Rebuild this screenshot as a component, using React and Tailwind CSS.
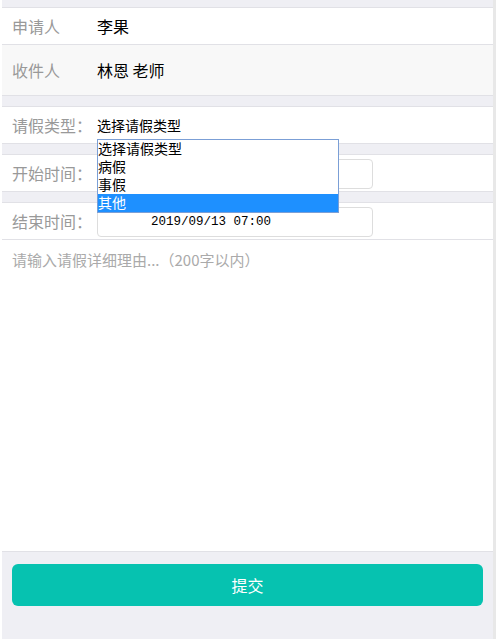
import React from "react";

const cjk = { fontFamily: '"Noto Sans CJK SC", "Noto Sans", sans-serif' };

function Row({ label, children, tall, shaded }) {
  return (
    <div
      className={`flex items-center border-b border-[#e1e1e6] ${tall ? "h-[51px]" : "h-[37px]"} ${shaded ? "bg-[#f8f8f8]" : "bg-white"}`}
    >
      <div className="w-[95px] shrink-0 whitespace-nowrap pl-[10px] text-[16px] text-[#999999] leading-none">{label}</div>
      <div className="flex-1 flex items-center">{children}</div>
    </div>
  );
}

const Band = ({ h }) => <div className={`${h} bg-[#efeff4] border-b border-[#e1e1e6]`} />;

const DateBox = ({ value }) => (
  <div className="w-[276px] h-[30px] mt-[2px] pr-[48px] border border-[#dddddd] rounded-[4px] flex items-center justify-center text-[12.5px] text-black font-['Liberation_Mono',monospace]">
    {value}
  </div>
);

export default function App() {
  const options = ["选择请假类型", "病假", "事假", "其他"];
  return (
    <div className="flex h-[639px] w-[496px] bg-white overflow-hidden" style={cjk}>
      <div className="w-[2px]" />
      <div className="relative flex flex-col w-[491px]">
        <Band h="h-[8px]" />
        <Row label="申请人">
          <span className="text-[16px] text-black leading-none">李果</span>
        </Row>
        <Row label="收件人" tall shaded>
          <span className="text-[16px] text-black leading-none">林恩 老师</span>
        </Row>
        <Band h="h-[11px]" />
        <Row label="请假类型：">
          <span className="text-[14px] text-black leading-none">选择请假类型</span>
        </Row>
        <Band h="h-[11px]" />
        <Row label="开始时间：">
          <DateBox value="2019/09/13 07:00" />
        </Row>
        <Band h="h-[11px]" />
        <Row label="结束时间：">
          <DateBox value="2019/09/13 07:00" />
        </Row>
        <div className="flex-1 px-[10px] pt-[9px] text-[15px] text-[#aaaaaa]">
          请输入请假详细理由...（200字以内）
        </div>
        <div className="h-[88px] bg-[#efeff4] border-t border-[#e1e1e6] px-[10px] pt-[12px]">
          <button className="w-full h-[42px] rounded-[6px] bg-[#06c2b0] text-white text-[16px]">提交</button>
        </div>

        <div className="absolute left-[95px] top-[139px] w-[242px] h-[74px] border border-[#7b9fd6] bg-white">
          {options.map((o, i) => (
            <div
              key={o}
              className={`h-[18px] flex items-center text-[14px] leading-none pb-[2px] ${i === 3 ? "bg-[#1e90ff] text-white" : "text-black"}`}
            >
              {o}
            </div>
          ))}
        </div>
      </div>
      <div className="w-[3px] bg-[#e8e8e8]" />
    </div>
  );
}
